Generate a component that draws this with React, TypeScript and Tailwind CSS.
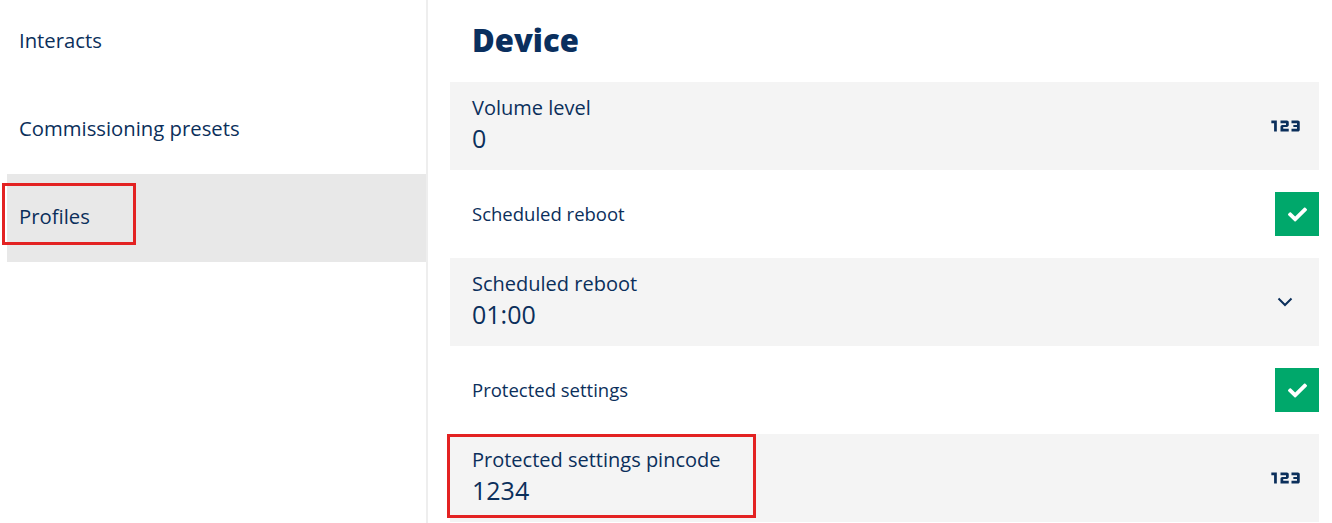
import { FaCheck } from "react-icons/fa";
import { Md123 } from "react-icons/md";

const font = { fontFamily: '"Open Sans", "Noto Sans", sans-serif' };

function Chevron() {
  return (
    <svg width="16" height="10" viewBox="0 0 16 10" fill="none">
      <path d="M1.5 1.5 8 8l6.5-6.5" stroke="#0b2f5b" strokeWidth="2" />
    </svg>
  );
}

function CheckBox() {
  return (
    <div className="w-[44px] h-[44px] bg-[#00a86b] flex items-center justify-center">
      <FaCheck className="text-white" size={19} />
    </div>
  );
}

function Field({ label, value }: { label: string; value: string }) {
  return (
    <div className="flex flex-col pb-[4px]">
      <span className="text-[20px] leading-[26px] mb-[1px]">{label}</span>
      <span className="text-[25px] leading-[32px]">{value}</span>
    </div>
  );
}

export default function App() {
  const nav = ["Interacts", "Commissioning presets", "Profiles"];

  return (
    <div className="flex h-[523px] w-full bg-white text-[#0b2f5b] overflow-hidden" style={font}>
      {/* Sidebar */}
      <aside className="w-[428px] shrink-0 border-r-2 border-[#eeeeee] pl-[7px]">
        <div className="-mt-[2px]">
          {nav.map((item, i) => (
            <div
              key={item}
              className={
                "relative h-[88px] flex items-center pl-[12px] pb-[3px] text-[20.3px] " +
                (i === 2 ? "bg-[#e8e8e8]" : "")
              }
            >
              {item}
              {i === 2 && (
                <div className="absolute left-[-5px] top-[9px] w-[134px] h-[62px] border-[3px] border-[#e32222]" />
              )}
            </div>
          ))}
        </div>
      </aside>

      {/* Content */}
      <main className="flex-1 pl-[22px] pr-[13px]">
        <h1 className="h-[82px] flex items-center pl-[22px] pb-[2px] text-[31px] font-extrabold text-[#0a2f5e]">
          Device
        </h1>

        <div className="h-[88px] bg-[#f4f4f4] flex items-center justify-between pl-[22px] pr-[11px]">
          <Field label="Volume level" value="0" />
          <Md123 size={44} />
        </div>

        <div className="h-[88px] flex items-center justify-between pl-[22px]">
          <span className="text-[18.5px]">Scheduled reboot</span>
          <CheckBox />
        </div>

        <div className="h-[88px] bg-[#f4f4f4] flex items-center justify-between pl-[22px] pr-[26px]">
          <Field label="Scheduled reboot" value="01:00" />
          <Chevron />
        </div>

        <div className="h-[88px] flex items-center justify-between pl-[22px]">
          <span className="text-[18.5px]">Protected settings</span>
          <CheckBox />
        </div>

        <div className="relative h-[88px] bg-[#f4f4f4] flex items-center justify-between pl-[22px] pr-[11px]">
          <Field label="Protected settings pincode" value="1234" />
          <Md123 size={44} />
          <div className="absolute left-[-3px] top-0 w-[309px] h-[84px] border-[3px] border-[#e32222]" />
        </div>
      </main>
    </div>
  );
}
